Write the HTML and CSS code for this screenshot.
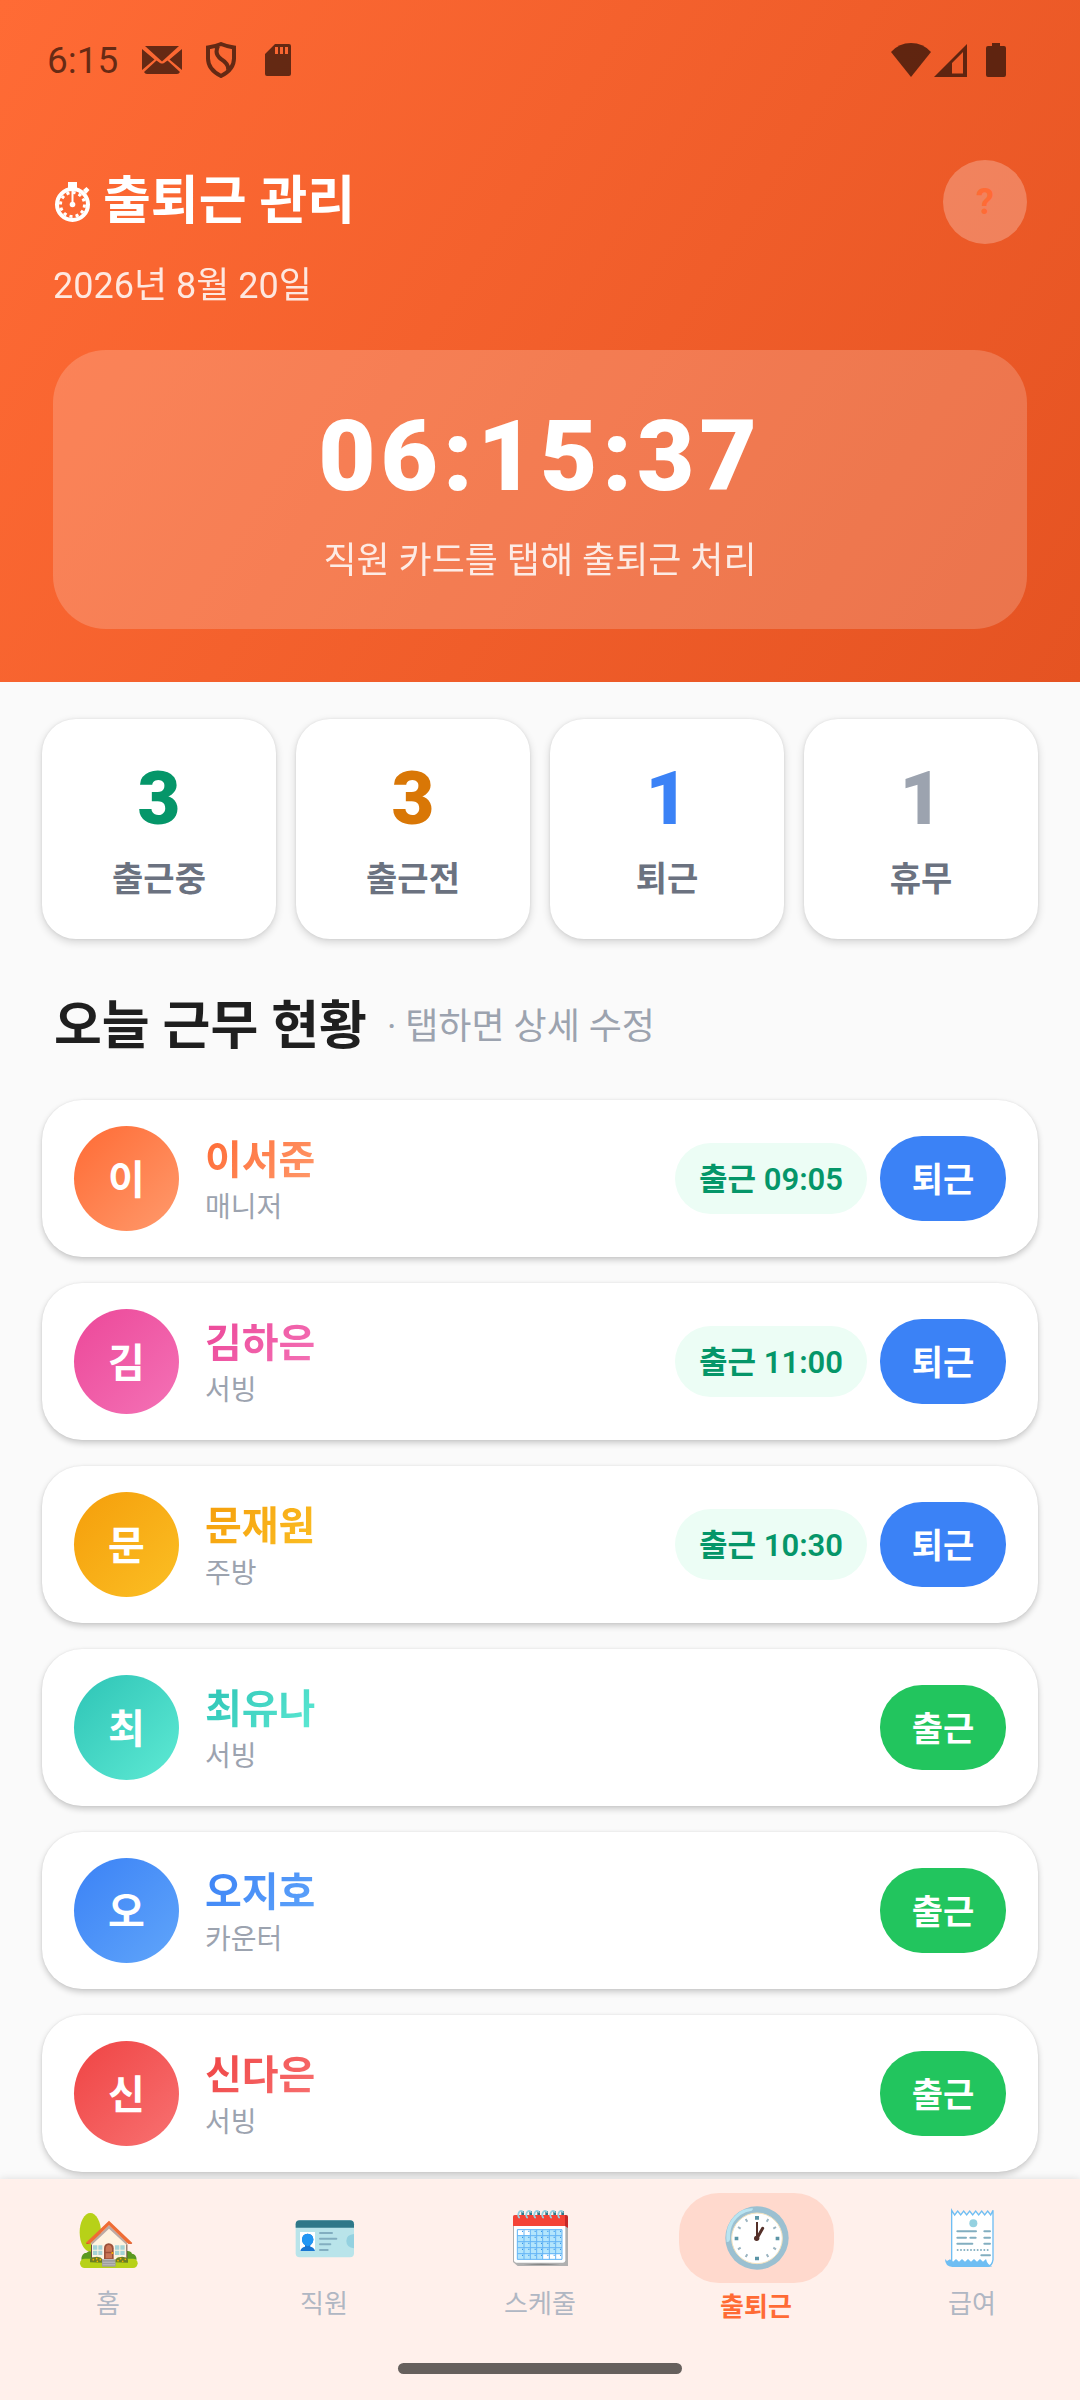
FILE: index.html
```html
<!DOCTYPE html>
<html lang="ko">
<head>
<meta charset="utf-8">
<meta name="viewport" content="width=device-width, initial-scale=1">
<title>출퇴근 관리</title>
<link rel="stylesheet" href="styles.css">
</head>
<body>
<header class="hero">
  <div class="status-bar">
    <span class="status-time">6:15</span>
    <div class="status-left">
      <svg width="40" height="28" viewBox="0 0 40 28" aria-hidden="true"><path d="M3 0h34l-17 15.500z"/><path d="M0 3l12.500 10.500L0 24zM40 3v21L27.500 13.500zM14.500 14.500l3.500 2.500q2 1.200 4 0l3.500-2.500L38 26q-1 2-3 2H5q-2 0-3-2z"/></svg>
      <svg width="30" height="36" viewBox="0 0 30 36" aria-hidden="true"><path class="line" d="M15 2q6 2.500 13 3.500v11q0 11-13 17.500Q2 27.500 2 16.500V5.500Q9 4.500 15 2zM12 4q-4 8 3 13 8 5 7 11"/></svg>
      <svg class="card-icon" width="26" height="32" viewBox="0 0 26 32" aria-hidden="true"><path fill-rule="evenodd" d="M10 0h14q2 0 2 2v28q0 2-2 2H2q-2 0-2-2V10zM10 3v7h3V3zm5 0v7h3V3zm5 0v7h3V3z"/></svg>
    </div>
    <div class="status-right">
      <svg width="40" height="34" viewBox="0 0 40 34" aria-hidden="true"><path d="M0 9Q8 0 20 0t20 9L20 34z"/></svg>
      <svg width="33" height="34" viewBox="0 0 33 34" aria-hidden="true"><path fill-rule="evenodd" d="M33 1v33H0zM29 9L18 20v10.500h11z"/></svg>
      <svg class="battery" width="20" height="34" viewBox="0 0 20 34" aria-hidden="true"><path d="M6 0h8v3h4q2 0 2 2v27q0 2-2 2H2q-2 0-2-2V5q0-2 2-2h4z"/></svg>
    </div>
  </div>
  <div class="hero-body">
    <div class="title-row">
      <div>
        <h1 class="title">
          <svg width="36" height="40" viewBox="0 0 36 40" aria-hidden="true"><path d="M13 0h9v7h-9zM28 8l3.500-3 3 3-3.500 4z"/><circle class="ring" cx="17.500" cy="22.500" r="15.500"/><circle class="ticks" cx="17.500" cy="22.500" r="12" pathLength="48"/><path d="M16.500 6h2v14h-2z"/><circle cx="17.500" cy="22.500" r="2.800"/></svg>
          출퇴근 관리
        </h1>
        <p class="date">2026년 8월 20일</p>
      </div>
      <button class="help" type="button" aria-label="도움말">?</button>
    </div>
    <section class="clock-card">
      <time class="clock">06:15:37</time>
      <p class="hint">직원 카드를 탭해 출퇴근 처리</p>
    </section>
  </div>
</header>

<main class="content">
  <section class="stats">
    <div class="stat"><strong class="stat-num working">3</strong><span class="stat-label">출근중</span></div>
    <div class="stat"><strong class="stat-num waiting">3</strong><span class="stat-label">출근전</span></div>
    <div class="stat"><strong class="stat-num left">1</strong><span class="stat-label">퇴근</span></div>
    <div class="stat"><strong class="stat-num off">1</strong><span class="stat-label">휴무</span></div>
  </section>

  <div class="section-head">
    <h2 class="section-title">오늘 근무 현황</h2>
    <span class="section-note">· 탭하면 상세 수정</span>
  </div>

  <ul class="staff-list">
    <li class="staff orange">
      <span class="avatar">이</span>
      <div class="who"><span class="name">이서준</span><span class="role">매니저</span></div>
      <span class="chip">출근 09:05</span><button class="action out" type="button">퇴근</button>
    </li>
    <li class="staff pink">
      <span class="avatar">김</span>
      <div class="who"><span class="name">김하은</span><span class="role">서빙</span></div>
      <span class="chip">출근 11:00</span><button class="action out" type="button">퇴근</button>
    </li>
    <li class="staff amber">
      <span class="avatar">문</span>
      <div class="who"><span class="name">문재원</span><span class="role">주방</span></div>
      <span class="chip">출근 10:30</span><button class="action out" type="button">퇴근</button>
    </li>
    <li class="staff teal">
      <span class="avatar">최</span>
      <div class="who"><span class="name">최유나</span><span class="role">서빙</span></div>
      <button class="action in" type="button">출근</button>
    </li>
    <li class="staff blue">
      <span class="avatar">오</span>
      <div class="who"><span class="name">오지호</span><span class="role">카운터</span></div>
      <button class="action in" type="button">출근</button>
    </li>
    <li class="staff red">
      <span class="avatar">신</span>
      <div class="who"><span class="name">신다은</span><span class="role">서빙</span></div>
      <button class="action in" type="button">출근</button>
    </li>
  </ul>
</main>

<nav class="tabs">
  <div class="tab-row">
    <a class="tab" href="#home">
      <span class="tab-icon">
        <svg width="64" height="64" viewBox="228 132 192 192" aria-hidden="true">
          <path fill="#855c52" d="M266 262h9v34h-9z"/>
          <ellipse cx="271" cy="214" rx="32" ry="58" fill="#b7d118"/>
          <path fill="#5b9821" d="M244 296q0-20 16-21 8-8 20 2v22zM370 296v-24q22-6 26 6 13 1 14 18z"/>
          <rect x="240" y="293" width="173" height="28" rx="14" fill="#b7d118"/>
          <path fill="#fff3e0" d="M274 245l53-51 54 51v50H274z"/>
          <path fill="#6d4c41" d="M273 250h3v43h-3zM379 250h3v43h-3z"/>
          <path fill="#bcaaa4" d="M327 193l-53 51v9l53-50 54 50v-9z"/>
          <path fill="#bf360c" d="M327 188l62 60h8l-70-61-69 61h8z"/>
          <path fill="#ef6c35" d="M327 179l70 67-12 3-58-56-58 56-12-3z"/>
          <g fill="#a5d3d6"><path d="M279 253h13v13h-13zM295 253h12v13h-12zM279 269h13v13h-13zM295 269h12v13h-12zM345 253h13v13h-13zM361 253h13v13h-13zM345 269h13v13h-13zM361 269h13v13h-13z"/></g>
          <path fill="#9c5138" d="M312 294v-32q0-14 14-15 15 1 15 15v32z"/>
          <path fill="#ca7555" d="M317 272v-9q1-10 9-11 9 1 10 11v9zM317 277h19v15h-19z"/>
          <circle cx="337" cy="276" r="3" fill="#ffb300"/>
          <path fill="#9e9e9e" d="M306 294h41v23h-41z"/><path fill="#bdbdbd" d="M308 294h37v3h-37zM308 302h37v3h-37zM308 310h37v3h-37z"/>
          <path fill="#6b7f24" d="M270 304v-9q2-7 10-6 12-3 18 0 9 1 8 9v7zM347 304v-7q2-9 10-8 10-3 17 0 10 1 10 9v7z"/>
          <g fill="#ffb300"><circle cx="280" cy="296" r="2.500"/><circle cx="290" cy="293" r="2.500"/><circle cx="292" cy="301" r="2.500"/><circle cx="301" cy="296" r="2.500"/><circle cx="354" cy="299" r="2.500"/><circle cx="362" cy="293" r="2.500"/><circle cx="368" cy="301" r="2.500"/><circle cx="376" cy="295" r="2.500"/></g>
        </svg>
      </span>
      <span class="tab-label">홈</span>
    </a>
    <a class="tab" href="#staff">
      <span class="tab-icon">
        <svg width="64" height="64" viewBox="876 132 192 192" aria-hidden="true">
          <rect x="887" y="178" width="175" height="111" rx="12" fill="#b9e4ea"/>
          <path fill="#2f7889" d="M887 200v-10q0-12 12-12h151q12 0 12 12v10z"/>
          <path fill="#94d1e0" d="M1062 219v43q-23-3-23-22t23-21z"/>
          <path fill="#fff" d="M900 213h45v57h-45z"/>
          <path fill="#1976d2" d="M901 270q2-11 14-13v-5q-9-6-9-17 1-16 17-17 16 1 17 17 0 11-9 17v5q12 2 14 13z"/>
          <path fill="#2196f3" d="M906 235q1-16 17-17 16 1 17 17 0 17-17 21-17-4-17-21z"/>
          <g stroke="#82aec0" stroke-width="6" stroke-linecap="round"><path d="M960 216h36M960 233h49M960 250h31M960 267h23"/></g>
        </svg>
      </span>
      <span class="tab-label">직원</span>
    </a>
    <a class="tab" href="#schedule">
      <span class="tab-icon">
        <svg width="64" height="64" viewBox="384 132 192 192" aria-hidden="true">
          <path fill="#b0b0b0" d="M399 168q0-6 6-6h153q6 0 6 6v147H413l-14-12z"/>
          <path fill="#fff" d="M402 190h154v108q0 7-7 7H409q-7 0-7-7z"/>
          <path fill="#858585" d="M430 310q50-4 110 0-50 4-110 0z"/>
          <path fill="#c62828" d="M552 162h6q6 0 6 6v33l-9-6z"/>
          <path fill="#f44336" d="M399 195v-27q0-6 6-6h150v33z"/>
          <path fill="#b3e5fc" d="M412 205h134v91H412z"/>
          <path fill="#fff" d="M414 207h37v15h-37zM488 280h57v15h-57z"/>
          <path fill="none" stroke="#64b5f6" stroke-width="3" d="M412 206h134v89H412zM412 224h134M412 242h134M412 260h134M412 278h134M432 206v89M451 206v89M470 206v89M488 206v89M508 206v89M527 206v89"/>
          <path fill="none" stroke="#1e88e5" stroke-width="3" stroke-dasharray="3 16" d="M426 211h120M426 229h120M426 247h120M426 265h120M426 283h120"/>
          <path fill="#2f7889" d="M424 150h8v12h-8zM448 150h8v12h-8zM472 150h8v12h-8zM496 150h8v12h-8zM520 150h8v12h-8zM544 150h8v12h-8z"/>
          <path fill="none" stroke="#94d1e0" stroke-width="5" d="M419 171q-6-4-4-12 3-11 11-9 3 1 3 5M443 171q-6-4-4-12 3-11 11-9 3 1 3 5M467 171q-6-4-4-12 3-11 11-9 3 1 3 5M491 171q-6-4-4-12 3-11 11-9 3 1 3 5M515 171q-6-4-4-12 3-11 11-9 3 1 3 5M539 171q-6-4-4-12 3-11 11-9 3 1 3 5"/>
        </svg>
      </span>
      <span class="tab-label">스케줄</span>
    </a>
    <a class="tab active" href="#attendance" aria-current="page">
      <span class="tab-icon">
        <svg width="66" height="66" viewBox="249 135 198 198" aria-hidden="true">
          <circle cx="351" cy="234" r="95" fill="#9bc0d1"/>
          <circle cx="351" cy="235" r="76" fill="#fff" stroke="#f4e3bf" stroke-width="3"/>
          <path fill="#b9e4f1" d="M260 246q-7-50 28-82 22-20 50-19 3 3-3 7-38 7-54 35-12 20-11 50-1 10-10 9z"/>
          <path fill="#5b95a6" d="M345 168h12v11h-12zM345 290h12v11h-12zM284 230h11v11h-11zM407 230h11v11h-11z"/>
          <g fill="none" stroke="#9bb4c0" stroke-width="6"><path d="M317 177l5 8M294 201l8 5M294 268l8-5M317 291l5-8M385 177l-5 8M408 201l-8 5M408 268l-8-5M385 291l-5-8"/></g>
          <path fill="none" stroke="#543029" stroke-width="9" stroke-linecap="round" d="M351 235l17-30"/>
          <path fill="none" stroke="#543029" stroke-width="6" d="M351 186v50"/>
          <circle cx="350" cy="235" r="8" fill="#543029"/>
        </svg>
      </span>
      <span class="tab-label">출퇴근</span>
    </a>
    <a class="tab" href="#pay">
      <span class="tab-icon">
        <svg width="64" height="64" viewBox="900 132 192 192" aria-hidden="true">
          <path fill="#fff" stroke="#6fbef3" stroke-width="4" d="M935 300V148l9 14 9-12 9 12 9-12 9 12 9-12 9 12 9-12 9 12 9-12 9 12 9-12 9 12 7-14v148q-3 22-20 20h-100z"/>
          <path fill="#6fbef3" d="M915 294l6 6 9-5 9 7 9-8 9 8 9-8 9 8 9-8 9 8 9-8 9 8 9-8 9 8 9-8q4 18 19 22-8 2-14 2H937q-22-2-22-24z"/>
          <circle cx="1000" cy="187" r="12" fill="#94d1e0"/>
          <g fill="none" stroke="#82aec0" stroke-width="6" stroke-linecap="round"><path d="M952 211h56M1033 211h17M952 230h26M991 230h16M1033 230h17M952 248h45M1033 248h17M1024 283h26"/><path stroke-dasharray="0 10" d="M953 267h98"/></g>
        </svg>
      </span>
      <span class="tab-label">급여</span>
    </a>
  </div>
  <div class="home-indicator"></div>
</nav>
</body>
</html>
```
FILE: styles.css
```css
* {
  box-sizing: border-box;
  margin: 0;
  padding: 0;
}

body {
  display: flex;
  flex-direction: column;
  min-height: 100vh;
  background: #fafafa;
  color: #1f1f1f;
  font-family: Roboto, "Noto Sans CJK KR", sans-serif;
}

button {
  border: 0;
  font: inherit;
  cursor: pointer;
}

svg {
  display: block;
  flex: none;
}

/* Header */
.hero {
  background: linear-gradient(122deg, #ff6b35, #e55322);
  color: #fff;
}

.status-bar {
  display: flex;
  align-items: center;
  height: 120px;
  padding: 0 74px 0 47px;
  color: rgba(0, 0, 0, 0.6);
  fill: currentColor;
}

.status-time {
  font-size: 37px;
}

.status-left {
  display: flex;
  align-items: center;
  gap: 24px;
  margin-left: 24px;
}

.status-left .line {
  fill: none;
  stroke: currentColor;
  stroke-width: 4;
}

.card-icon {
  margin-left: 5px;
}

.status-right {
  display: flex;
  align-items: center;
  gap: 3px;
  margin-left: auto;
}

.battery {
  margin-left: 16px;
}

.hero-body {
  padding: 40px 53px 53px;
}

.title-row {
  display: flex;
  justify-content: space-between;
  align-items: flex-start;
  margin-bottom: 39px;
}

.title {
  display: flex;
  align-items: center;
  gap: 12px;
  padding-left: 2px;
  font-size: 52px;
  font-weight: 700;
  line-height: 84px;
  fill: currentColor;
}

.title .ring {
  fill: none;
  stroke: currentColor;
  stroke-width: 4;
}

.title .ticks {
  fill: none;
  stroke: currentColor;
  stroke-width: 3;
  stroke-dasharray: 2 2;
}

.date {
  font-size: 36px;
  line-height: 50px;
  margin-top: 17px;
  opacity: 0.85;
}

.help {
  width: 84px;
  height: 84px;
  border-radius: 50%;
  background: rgba(255, 255, 255, 0.25);
  color: #ff6b35;
  font-size: 36px;
  font-weight: 700;
}

.clock-card {
  padding: 44px 32px 41px;
  border-radius: 53px;
  background: rgba(255, 255, 255, 0.19);
  text-align: center;
}

.clock {
  display: block;
  font-size: 99px;
  font-weight: 900;
  line-height: 124px;
  letter-spacing: 5px;
}

.hint {
  margin-top: 16px;
  font-size: 36px;
  line-height: 54px;
  opacity: 0.85;
}

/* Content */
.content {
  flex: 1;
  padding: 37px 42px 7px;
}

.stats {
  display: grid;
  grid-template-columns: repeat(4, 1fr);
  gap: 20px;
}

.stat {
  display: flex;
  flex-direction: column;
  align-items: center;
  gap: 13px;
  padding: 38px 0 35px;
  border-radius: 34px;
  background: #fff;
  box-shadow: 0 3px 8px rgba(0, 0, 0, 0.16), 0 0 3px rgba(0, 0, 0, 0.08);
}

.stat-num {
  font-size: 74px;
  font-weight: 900;
  line-height: 84px;
}

.working { color: #059669; }
.waiting { color: #d97706; }
.left { color: #3b82f6; }
.off { color: #9ca3af; }

.stat-label {
  color: #6b7280;
  font-size: 34px;
  font-weight: 600;
  line-height: 50px;
}

.section-head {
  display: flex;
  align-items: center;
  gap: 20px;
  margin: 55px 0 40px;
  padding-left: 12px;
  line-height: 66px;
}

.section-title {
  font-size: 52px;
  font-weight: 700;
}

.section-note {
  color: #9ca3af;
  font-size: 36px;
}

.staff-list {
  display: flex;
  flex-direction: column;
  gap: 26px;
  list-style: none;
}

.staff {
  display: flex;
  align-items: center;
  padding: 26px 32px;
  border-radius: 40px;
  background: #fff;
  box-shadow: 0 3px 6px rgba(0, 0, 0, 0.2), 0 0 2px rgba(0, 0, 0, 0.08);
}

.avatar {
  flex: none;
  width: 105px;
  height: 105px;
  border-radius: 50%;
  background: var(--tone);
  color: #fff;
  font-size: 40px;
  font-weight: 700;
  line-height: 109px;
  text-align: center;
}

.who {
  display: flex;
  flex: 1;
  flex-direction: column;
  align-items: flex-start;
  margin-left: 26px;
  padding-top: 7px;
}

.name {
  background: var(--tone);
  background-clip: text;
  -webkit-background-clip: text;
  color: transparent;
  font-size: 40px;
  font-weight: 700;
  line-height: 52px;
}

.role {
  color: #9ca3af;
  font-size: 28px;
  line-height: 42px;
}

.orange { --tone: linear-gradient(135deg, #ff6b35, #ff9a6c); }
.pink { --tone: linear-gradient(135deg, #ec4899, #f472b6); }
.amber { --tone: linear-gradient(135deg, #f59e0b, #fbbf24); }
.teal { --tone: linear-gradient(135deg, #2ec4b6, #5eead4); }
.blue { --tone: linear-gradient(135deg, #3b82f6, #60a5fa); }
.red { --tone: linear-gradient(135deg, #ef4444, #f87171); }

.chip {
  padding: 3px 24px 0;
  border-radius: 36px;
  background: #ecfdf5;
  color: #059669;
  font-size: 31px;
  font-weight: 600;
  line-height: 68px;
}

.action {
  width: 126px;
  height: 85px;
  margin-left: 13px;
  padding-bottom: 2px;
  border-radius: 42px;
  color: #fff;
  font-size: 34px;
  font-weight: 700;
}

.action.out { background: #3b82f6; }
.action.in { background: #22c55e; }

/* Bottom navigation */
.tabs {
  position: sticky;
  bottom: 0;
  padding: 14px 0 26px;
  background: #fff0eb;
  box-shadow: 0 0 8px rgba(0, 0, 0, 0.12);
}

.tab-row {
  display: grid;
  grid-template-columns: repeat(5, 1fr);
}

.tab {
  display: flex;
  flex-direction: column;
  align-items: center;
  gap: 5px;
  color: #b0b7c3;
  text-decoration: none;
}

.tab-icon {
  display: flex;
  justify-content: center;
  align-items: center;
  width: 155px;
  height: 87px;
  border-radius: 40px;
}

.tab-label {
  font-size: 26px;
  line-height: 38px;
}

.tab.active {
  color: #ff6b35;
}

.tab.active .tab-icon {
  height: 90px;
  background: #ffd9cd;
}

.tab.active .tab-label {
  font-weight: 700;
}

.home-indicator {
  width: 284px;
  height: 11px;
  margin: 37px auto 0;
  border-radius: 6px;
  background: #66605d;
}
```
